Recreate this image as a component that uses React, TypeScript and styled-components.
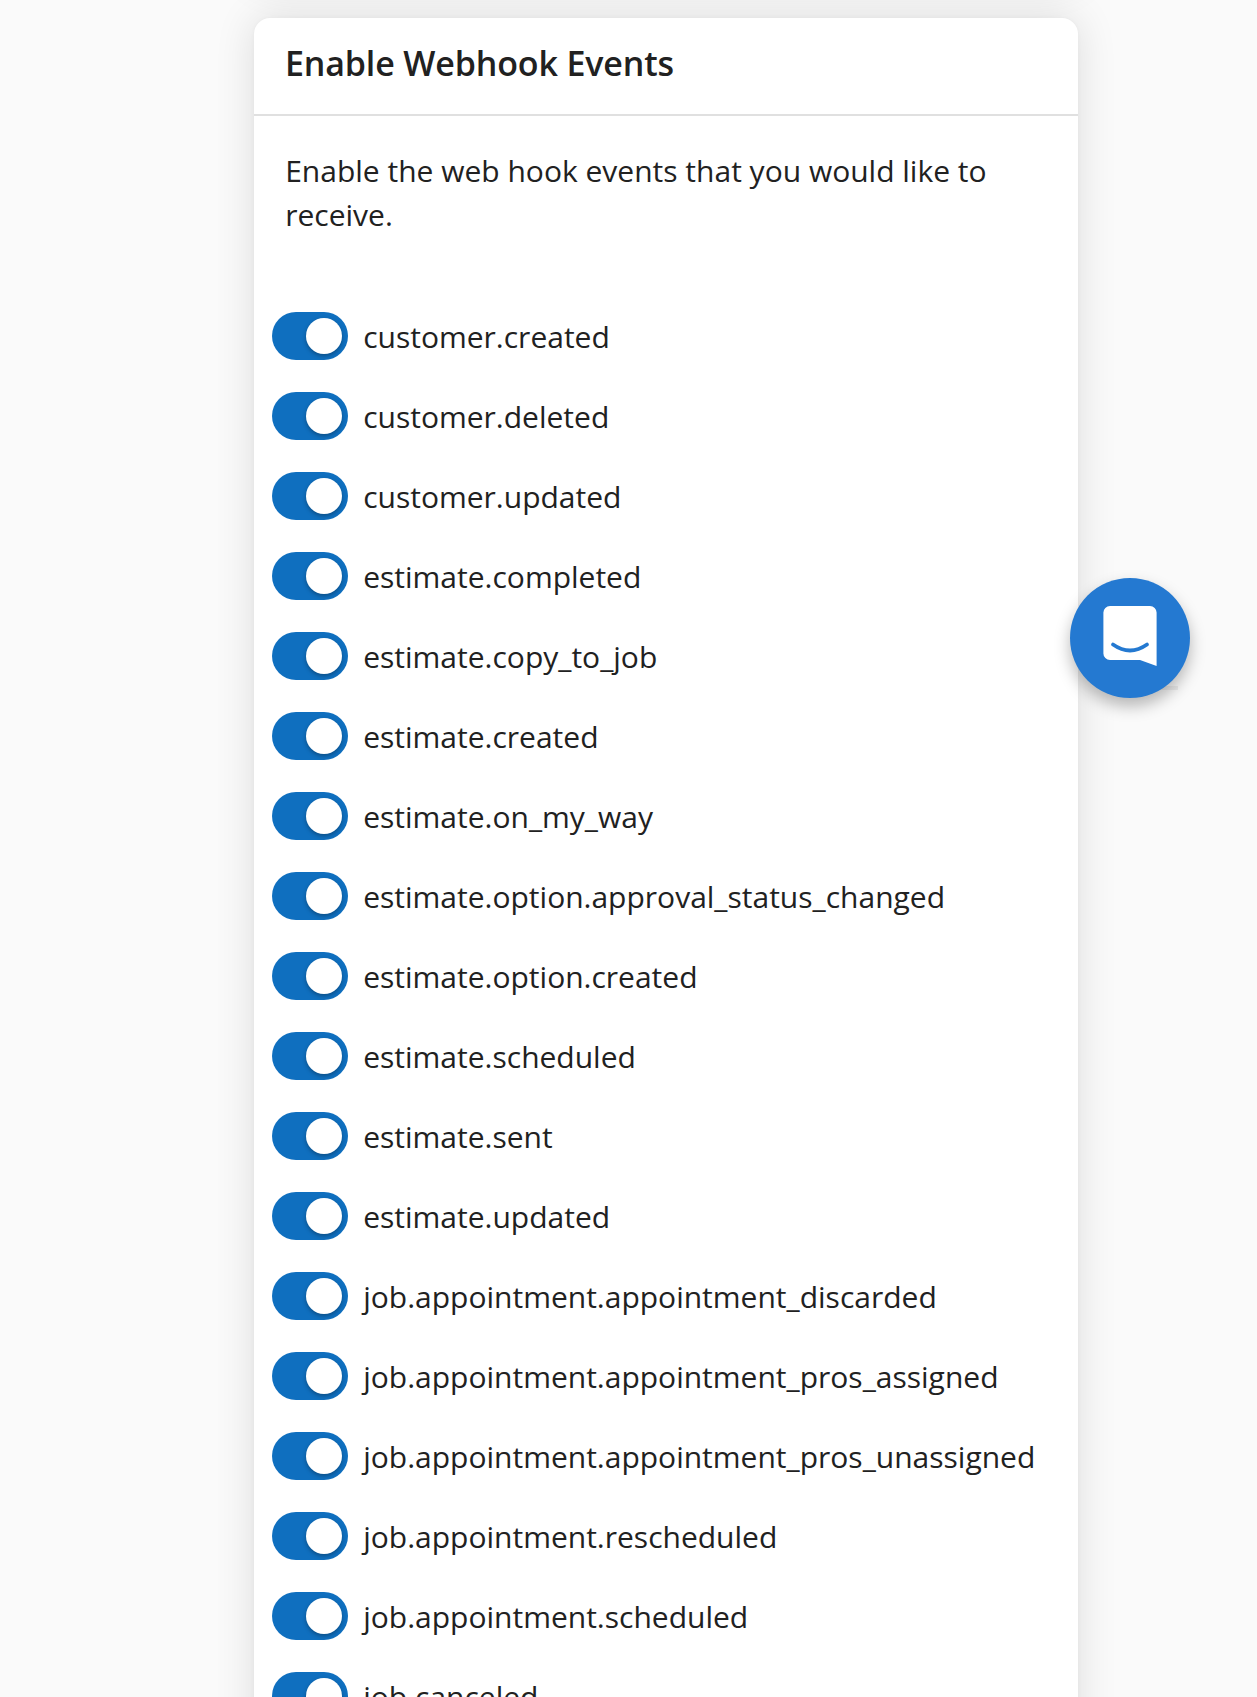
import React, { useState } from "react";
import styled, { createGlobalStyle } from "styled-components";

const GlobalStyle = createGlobalStyle`
  *, *::before, *::after { box-sizing: border-box; }
  html, body { margin: 0; height: 1697px; overflow: hidden; background: #fafafa; }
  body { font-family: "Open Sans", "Noto Sans", sans-serif; color: #212121; }
`;

const Page = styled.main`
  display: flex;
  flex-direction: column;
  align-items: center;
  gap: 36px;
  height: 1697px;
  padding-left: 75px;
  overflow: hidden;
  background: #fafafa;
`;

const Card = styled.section`
  width: 824px;
  height: 1760px;
  flex: none;
  background: #fff;
  border-radius: 16px;
  box-shadow: 0 0 40px rgba(0, 0, 0, 0.12), 0 0 4px rgba(0, 0, 0, 0.03);
`;

const PreviousCard = styled(Card)`
  height: 200px;
  margin-top: -218px;
`;

const CardHeader = styled.header`
  height: 98px;
  padding: 21px 31px 0;
  border-bottom: 2px solid #e0e0e0;
`;

const Title = styled.h2`
  margin: 0;
  font-size: 34px;
  line-height: 48px;
  font-weight: 600;
  letter-spacing: -0.15px;
`;

const Description = styled.p`
  margin: 0;
  padding: 33px 31px 0 31.2px;
  font-size: 30px;
  line-height: 44px;
`;

const EventList = styled.ul`
  display: grid;
  grid-auto-rows: 80px;
  margin: 0;
  padding: 59px 0 0 18px;
  list-style: none;
`;

const EventRow = styled.li`
  display: flex;
  align-items: center;
  gap: 15.2px;
`;

const Switch = styled.button<{ $on: boolean }>`
  display: flex;
  justify-content: ${(p) => (p.$on ? "flex-end" : "flex-start")};
  align-items: center;
  flex: none;
  width: 76px;
  height: 48px;
  padding: 0 6px;
  border: 0;
  border-radius: 24px;
  background: ${(p) => (p.$on ? "#0f6fbf" : "#bdbdbd")};
`;

const Thumb = styled.span`
  width: 36px;
  height: 36px;
  border-radius: 50%;
  background: #fff;
  box-shadow: 0 2px 4px rgba(0, 0, 0, 0.3);
`;

const EventName = styled.span`
  padding-top: 1px;
  font-size: 30px;
  line-height: 44px;
  white-space: nowrap;
`;

const ChatLauncher = styled.div`
  position: fixed;
  left: 1070px;
  top: 578px;
  width: 120px;
  height: 120px;
`;

const LauncherTrack = styled.span`
  position: absolute;
  left: 60px;
  top: 108px;
  width: 48px;
  height: 4px;
  background: rgba(0, 0, 0, 0.06);
`;

const ChatButton = styled.button`
  position: relative;
  display: block;
  width: 120px;
  height: 120px;
  padding: 0;
  border: 0;
  border-radius: 50%;
  background: #2479d1;
  box-shadow: 0 8px 16px rgba(0, 0, 0, 0.28);

  svg { display: block; }
`;

const EVENTS = [
  "customer.created",
  "customer.deleted",
  "customer.updated",
  "estimate.completed",
  "estimate.copy_to_job",
  "estimate.created",
  "estimate.on_my_way",
  "estimate.option.approval_status_changed",
  "estimate.option.created",
  "estimate.scheduled",
  "estimate.sent",
  "estimate.updated",
  "job.appointment.appointment_discarded",
  "job.appointment.appointment_pros_assigned",
  "job.appointment.appointment_pros_unassigned",
  "job.appointment.rescheduled",
  "job.appointment.scheduled",
  "job.canceled",
];

function EventToggle({ name }: { name: string }) {
  const [on, setOn] = useState(true);
  return (
    <EventRow>
      <Switch $on={on} role="switch" aria-checked={on} onClick={() => setOn(!on)}>
        <Thumb />
      </Switch>
      <EventName>{name}</EventName>
    </EventRow>
  );
}

export default function App() {
  return (
    <>
      <GlobalStyle />
      <Page>
        <PreviousCard />
        <Card>
          <CardHeader>
            <Title>Enable Webhook Events</Title>
          </CardHeader>
          <Description>Enable the web hook events that you would like to receive.</Description>
          <EventList>
            {EVENTS.map((name) => (
              <EventToggle key={name} name={name} />
            ))}
          </EventList>
        </Card>
      </Page>
      <ChatLauncher>
        <LauncherTrack />
        <ChatButton>
          <svg width="120" height="120" viewBox="0 0 120 120" fill="none">
            <path
              d="M40 28H80A6.600 6.600 0 0 1 86.600 34.600V88L70 82H40A6.600 6.600 0 0 1 33.400 75.400V34.600A6.600 6.600 0 0 1 40 28Z"
              fill="#fff"
            />
            <path d="M43 66.500Q60 78.400 77 66.500" stroke="#2479d1" strokeWidth="3.800" strokeLinecap="round" />
          </svg>
        </ChatButton>
      </ChatLauncher>
    </>
  );
}
